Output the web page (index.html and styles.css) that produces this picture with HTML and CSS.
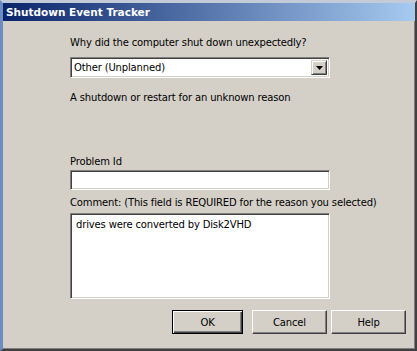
FILE: index.html
```html
<!DOCTYPE html>
<html>
<head>
<meta charset="utf-8">
<link rel="stylesheet" href="styles.css">
</head>
<body>
<div class="window">
  <div class="titlebar">Shutdown Event Tracker</div>
  <div class="client">
    <div class="label l1">Why did the computer shut down unexpectedly?</div>
    <div class="select">
      <span class="select-text">Other (Unplanned)</span>
      <span class="arrow-btn"><svg width="7" height="4" viewBox="0 0 7 4"><path d="M0 0H7L3.5 4Z" fill="#000"/></svg></span>
    </div>
    <div class="label desc">A shutdown or restart for an unknown reason</div>
    <div class="label pid">Problem Id</div>
    <div class="field input"></div>
    <div class="label comment">Comment: (This field is REQUIRED for the reason you selected)</div>
    <div class="field textarea">drives were converted by Disk2VHD</div>
    <div class="buttons">
      <div class="btn default"><span class="btn-inner">OK</span></div>
      <div class="btn cancel"><span class="btn-inner">Cancel</span></div>
      <div class="btn help"><span class="btn-inner">Help</span></div>
    </div>
  </div>
</div>
</body>
</html>
```
FILE: styles.css
```css
html, body {
  margin: 0;
  padding: 0;
  background: #d4d0c8;
}
.window {
  width: 417px;
  height: 351px;
  box-sizing: border-box;
  background: #d4d0c8;
  border-top: 3px solid #c3cbd9;
  border-left: 3px solid #6d8cc4;
  border-right: 2px solid #404040;
  border-bottom: 2px solid #404040;
  box-shadow: inset -1px -1px 0 #808080;
  font-family: "DejaVu Sans", sans-serif;
  font-size: 10px;
  letter-spacing: -0.15px;
  color: #000;
  display: flex;
  flex-direction: column;
}
.titlebar {
  height: 18px;
  line-height: 18px;
  background: linear-gradient(to right, #0a246a, #a6caf0);
  color: #fff;
  font-weight: bold;
  font-size: 10.5px;
  letter-spacing: 0;
  padding-left: 3px;
  white-space: nowrap;
}
.client {
  padding-left: 67px;
  display: flex;
  flex-direction: column;
  align-items: flex-start;
}
.label {
  line-height: 13px;
  height: 13px;
  white-space: nowrap;
}
.l1 { margin-top: 15px; }
.select {
  margin-top: 8px;
  width: 260px;
  height: 21px;
  box-sizing: border-box;
  background: #fff;
  border-top: 1px solid #808080;
  border-left: 1px solid #808080;
  border-right: 1px solid #fff;
  border-bottom: 1px solid #fff;
  box-shadow: inset 1px 1px 0 #404040, inset -1px -1px 0 #d4d0c8;
  display: flex;
  align-items: center;
  padding: 2px;
}
.select-text {
  flex: 1;
  padding-left: 1px;
  line-height: 15px;
}
.arrow-btn {
  width: 16px;
  height: 15px;
  box-sizing: border-box;
  background: #d4d0c8;
  border-top: 1px solid #d4d0c8;
  border-left: 1px solid #d4d0c8;
  border-right: 1px solid #404040;
  border-bottom: 1px solid #404040;
  box-shadow: inset 1px 1px 0 #fff, inset -1px -1px 0 #808080;
  display: flex;
  align-items: center;
  justify-content: center;
}
.desc { margin-top: 13px; }
.pid { margin-top: 51px; }
.field {
  width: 260px;
  box-sizing: border-box;
  background: #fff;
  border-top: 1px solid #808080;
  border-left: 1px solid #808080;
  border-right: 1px solid #fff;
  border-bottom: 1px solid #fff;
  box-shadow: inset 1px 1px 0 #404040, inset -1px -1px 0 #d4d0c8;
}
.input {
  margin-top: 2px;
  height: 20px;
}
.comment { margin-top: 6px; }
.textarea {
  margin-top: 4px;
  height: 86px;
  padding: 4px 5px;
  line-height: 13px;
}
.buttons {
  margin-top: 11px;
  display: flex;
  align-self: stretch;
  justify-content: flex-end;
  padding-right: 9px;
  gap: 4px;
}
.btn {
  height: 24px;
  box-sizing: border-box;
  background: #d4d0c8;
  border-top: 1px solid #fff;
  border-left: 1px solid #fff;
  border-right: 1px solid #404040;
  border-bottom: 1px solid #404040;
  box-shadow: inset -1px -1px 0 #808080;
  display: flex;
  align-items: center;
  justify-content: center;
}
.btn-inner {
  line-height: 13px;
}
.btn.default {
  width: 71px;
  border: 1px solid #000;
  box-shadow: inset 1px 1px 0 #fff, inset -1px -1px 0 #404040, inset -2px -2px 0 #808080;
  margin-right: 5px;
}
.btn.cancel { width: 75px; }
.btn.help { width: 75px; }
```
